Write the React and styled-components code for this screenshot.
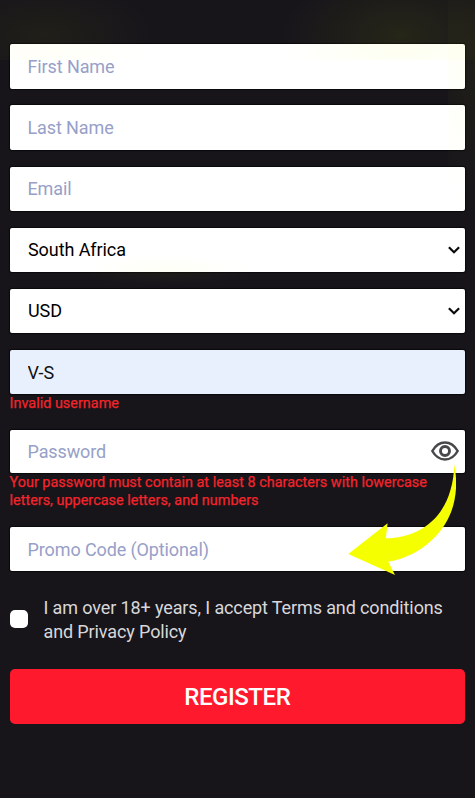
import React, { useState } from 'react'
import styled, { createGlobalStyle } from 'styled-components';

const errors = {
  username: 'Invalid username',
  password: 'Your password must contain at least 8 characters with lowercase letters, uppercase letters, and numbers',
};

const Chevron = () => (
  <svg width="12" height="8" viewBox="0 0 12 8" fill="none">
    <path d="M0.9 1.2 L6 6.2 L11.1 1.2" stroke="#0b0b0d" strokeWidth="2.2" />
  </svg>
);

const Eye = () => (
  <svg width="28" height="20" viewBox="0 0 28 20" fill="none" stroke="#48484a">
    <path d="M1.3 10 C4.4 4.6 8.8 1.5 14 1.5 C19.2 1.5 23.6 4.6 26.7 10 C23.6 15.4 19.2 18.5 14 18.5 C8.8 18.5 4.4 15.4 1.3 10 Z" strokeWidth="2.5" strokeLinejoin="round" />
    <circle cx="14" cy="10" r="4.5" strokeWidth="2.9" />
  </svg>
);

const App = () => {
  const [form, setForm] = useState({
    firstName: '', lastName: '', email: '', country: 'South Africa',
    currency: 'USD', username: 'V-S', password: '', promo: '',
  });
  const [accepted, setAccepted] = useState(false);
  const [showPassword, setShowPassword] = useState(false);

  const bind = (name) => ({
    name,
    value: form[name],
    onChange: (e) => setForm({ ...form, [name]: e.target.value }),
  });

  return (
    <>
      <GlobalStyle />
      <Page>
        <Form onSubmit={(e) => e.preventDefault()}>
          <Field><Input placeholder="First Name" {...bind('firstName')} /></Field>
          <Field><Input placeholder="Last Name" {...bind('lastName')} /></Field>
          <Field><Input placeholder="Email" {...bind('email')} /></Field>
          <Field>
            <Select {...bind('country')}>
              <option>South Africa</option>
            </Select>
            <Chevron />
          </Field>
          <Field>
            <Select {...bind('currency')}>
              <option>USD</option>
            </Select>
            <Chevron />
          </Field>
          <Group $height={80}>
            <Field $filled><Input {...bind('username')} /></Field>
            <ErrorText>{errors.username}</ErrorText>
          </Group>
          <Group $height={97.5}>
            <Field $short>
              <Input type={showPassword ? 'text' : 'password'} placeholder="Password" {...bind('password')} />
              <IconButton type="button" aria-label="Show password" onClick={() => setShowPassword(!showPassword)}>
                <Eye />
              </IconButton>
            </Field>
            <ErrorText>{errors.password}</ErrorText>
            <Arrow viewBox="0 0 108 112">
              <path d="M106.3 0 C112 31 104 55 88 72 C74 87 57 95 40.3 97.7 L47 111 L0.3 90 L39.6 59.3 L37.8 74.3 C74 74 105 51 106.3 0 Z" fill="#f6ff00" />
            </Arrow>
          </Group>
          <Field $short><Input placeholder="Promo Code (Optional)" {...bind('promo')} /></Field>
          <Terms>
            <Checkbox type="checkbox" checked={accepted} onChange={(e) => setAccepted(e.target.checked)} />
            <span>I am over 18+ years, I accept Terms and conditions and Privacy Policy</span>
          </Terms>
          <Register type="submit">REGISTER</Register>
        </Form>
        <Glow />
      </Page>
    </>
  )
}

const GlobalStyle = createGlobalStyle`
* {
  box-sizing: border-box;
}

body {
  margin: 0;
  background-color: #17151a;
  font-family: Roboto, "Liberation Sans", sans-serif;
}

input, select, button {
  font-family: inherit;
}`;

const Page = styled.main`
position: relative;
width: 475px;
height: 798px;
padding: 44.4px 9.9px 0 9.5px;
background-color: #17151a;
overflow: hidden;
`;

const Form = styled.form`
display: flex;
flex-direction: column;
`;

const Field = styled.div`
display: flex;
align-items: center;
flex-shrink: 0;
height: ${({ $short }) => ($short ? '43.4px' : '44.3px')};
padding-right: 5px;
border-radius: 2px;
background-color: ${({ $filled }) => ($filled ? '#e8f0fe' : '#fff')};
box-shadow: 0 0 1px 1px rgba(0, 0, 0, 0.6);

& + & {
  margin-top: 16.8px;
}

svg {
  flex-shrink: 0;
}
`;

const Group = styled.div`
position: relative;
height: ${({ $height }) => $height}px;

${Field} + & {
  margin-top: 16.8px;
}
`;

const Input = styled.input`
flex: 1;
min-width: 0;
height: 100%;
padding: 0 0 0 18px;
border: 0;
outline: 0;
background: transparent;
color: #111;
font-size: 18px;
letter-spacing: -0.11px;

&::placeholder {
  color: #97a0c8;
  opacity: 1;
}
`;

const Select = styled.select`
flex: 1;
min-width: 0;
height: 100%;
padding: 0 0 0 18.5px;
border: 0;
outline: 0;
appearance: none;
background: transparent;
color: #000;
font-size: 18px;
letter-spacing: -0.08px;
`;

const IconButton = styled.button`
display: flex;
margin: -1px 1.4px 0 0;
padding: 0;
border: 0;
background: transparent;
`;

const ErrorText = styled.p`
margin: 0;
padding-top: 0.6px;
color: #f3242b;
font-size: 14.4px;
line-height: 18px;
letter-spacing: 0.02px;
-webkit-text-stroke: 0.25px #f3242b;
`;

const Arrow = styled.svg`
position: absolute;
top: 34.3px;
right: 9.4px;
width: 108px;
height: 112px;
pointer-events: none;
`;

const Terms = styled.label`
display: flex;
align-items: center;
margin-top: 25px;
color: #d8d8da;
font-size: 18px;
line-height: 24.5px;
letter-spacing: -0.12px;
`;

const Checkbox = styled.input`
flex-shrink: 0;
width: 18.5px;
height: 18px;
margin: -2px 15.5px 0 0;
appearance: none;
border-radius: 5px;
background-color: #fff;

&:checked {
  background-color: #ff192d;
}
`;

const Register = styled.button`
height: 55px;
margin-top: 23.9px;
padding-top: 2px;
border: 0;
border-radius: 5px;
background-color: #ff192d;
color: #fff;
font-size: 24px;
font-weight: 500;
letter-spacing: -0.45px;
`;

// faint yellow light showing over the form edges
const Glow = styled.div`
position: absolute;
inset: 0;
pointer-events: none;
background:
  radial-gradient(ellipse 110px 55px at 45px 35px, rgba(235, 255, 0, 0.045), transparent) 0 0 / 100% 60px no-repeat,
  radial-gradient(ellipse 120px 65px at 400px 35px, rgba(235, 255, 0, 0.07), transparent) 0 0 / 100% 60px no-repeat,
  radial-gradient(ellipse 60px 140px at 100% 70px, rgba(235, 255, 0, 0.04), transparent) 100% 0 / 27px 220px no-repeat,
  radial-gradient(ellipse 90px 15px at 165px 270px, rgba(235, 255, 0, 0.04), transparent) no-repeat;
`;

export default App;
